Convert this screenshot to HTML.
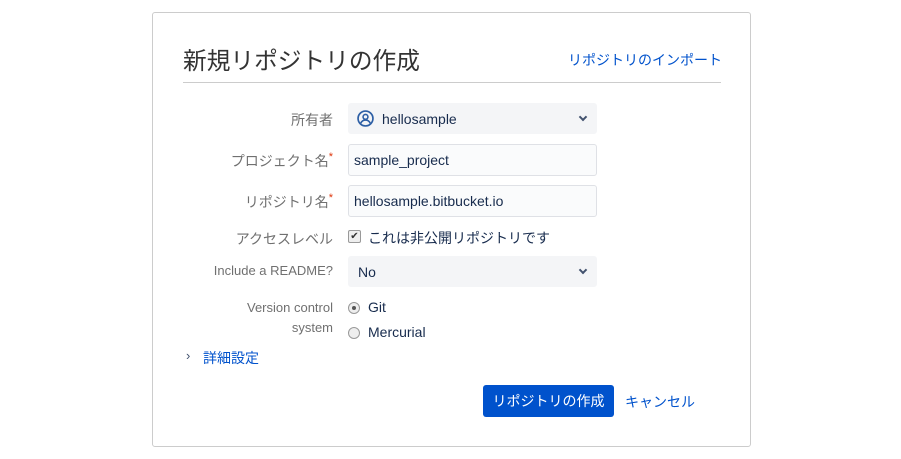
<!DOCTYPE html>
<html><head><meta charset="utf-8"><style>
body{margin:0;width:901px;height:459px;background:#fff;font-family:"Liberation Sans","Noto Sans CJK JP",sans-serif;position:relative;overflow:hidden}
.a{position:absolute}
.card{left:152px;top:12px;width:597px;height:433px;border:1px solid #ccc;border-radius:3px}
.lbl{right:568px;font-size:14px;color:#707070;text-align:right;white-space:nowrap}
.fld{left:348px;width:249px;height:31px;box-sizing:border-box;border-radius:3px;font-size:14px;color:#172b4d;line-height:30px}
.sel{background:#f4f5f7;border:1px solid #f4f5f7}
.inp{background:#fafbfc;border:1px solid #dfe1e6;padding-left:5px}
.star{color:#de350b;font-size:11px;vertical-align:top}
.chev{position:absolute;right:10px;top:10px;width:4px;height:4px;border-right:2px solid #42526e;border-bottom:2px solid #42526e;transform:rotate(45deg)}
.radio{width:10px;height:10px;border:1px solid #999;border-radius:50%;background:#eee}
</style></head><body>
<div class="a card"></div>
<div class="a" style="left:183px;top:42px;font-size:23.7px;color:#333">新規リポジトリの作成</div>
<div class="a" style="left:568px;top:50px;font-size:14px;color:#0052cc">リポジトリのインポート</div>
<div class="a" style="left:183px;top:82px;width:538px;height:1px;background:#ccc"></div>

<div class="a lbl" style="top:110px">所有者</div>
<div class="a fld sel" style="top:103px;padding-left:33px">hellosample<span class="chev"></span>
<svg class="a" style="left:8px;top:6px" width="17" height="17" viewBox="0 0 16 16"><circle cx="8" cy="8" r="7" fill="none" stroke="#2d5fa5" stroke-width="1.6"/><circle cx="8" cy="6.5" r="2.3" fill="none" stroke="#2d5fa5" stroke-width="1.5"/><path d="M3.5 12.5c1-2 2.5-3 4.5-3s3.5 1 4.5 3" fill="none" stroke="#2d5fa5" stroke-width="1.5"/></svg></div>

<div class="a lbl" style="top:151px">プロジェクト名<span class="star">*</span></div>
<div class="a fld inp" style="top:144px;height:32px">sample_project</div>
<div class="a lbl" style="top:192px">リポジトリ名<span class="star">*</span></div>
<div class="a fld inp" style="top:185px;height:32px">hellosample.bitbucket.io</div>

<div class="a lbl" style="top:229px">アクセスレベル</div>
<div class="a" style="left:348px;top:230px;width:11px;height:11px;border:1px solid #999;background:#eee;border-radius:2px;font-size:10px;line-height:11px;text-align:center;color:#333">✔</div>
<div class="a" style="left:368px;top:228px;font-size:14px;color:#172b4d">これは非公開リポジトリです</div>

<div class="a lbl" style="top:263px;font-size:13px">Include a README?</div>
<div class="a fld sel" style="top:256px;padding-left:9px">No<span class="chev"></span></div>

<div class="a lbl" style="top:298px;font-size:13px;line-height:20px">Version control<br>system</div>
<div class="a radio" style="left:348px;top:302px"><div style="width:4px;height:4px;margin:3px;border-radius:50%;background:#555"></div></div>
<div class="a" style="left:368px;top:299px;font-size:14px;color:#172b4d">Git</div>
<div class="a radio" style="left:348px;top:327px"></div>
<div class="a" style="left:368px;top:324px;font-size:14px;color:#172b4d">Mercurial</div>

<div class="a" style="left:186px;top:348px;font-size:13px;color:#42526e">›</div>
<div class="a" style="left:203px;top:348px;font-size:14px;color:#0052cc">詳細設定</div>

<div class="a" style="left:483px;top:385px;width:131px;height:32px;background:#0052cc;border-radius:3px;color:#fff;font-size:14px;line-height:32px;text-align:center">リポジトリの作成</div>
<div class="a" style="left:625px;top:392px;font-size:14px;color:#0052cc">キャンセル</div>
</body></html>
